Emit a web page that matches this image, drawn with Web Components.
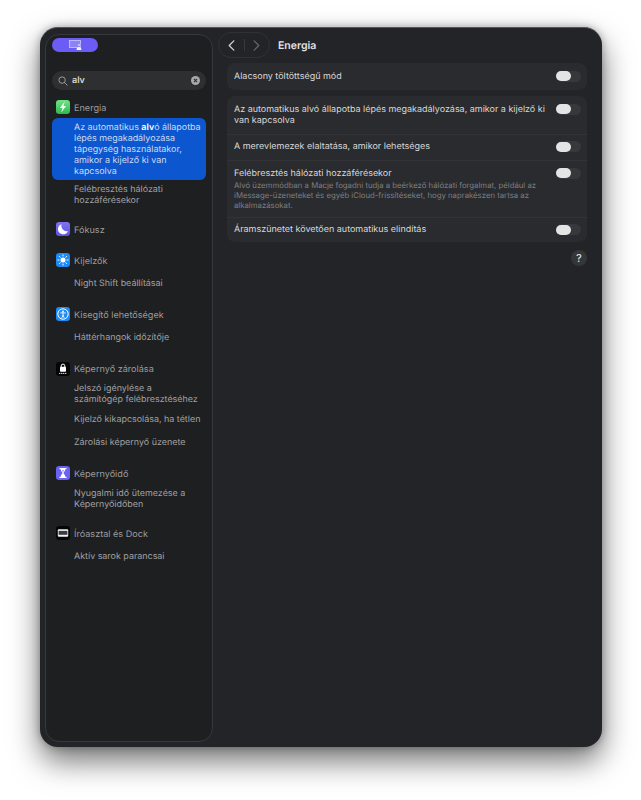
<!DOCTYPE html>
<html lang="hu">
<head>
<meta charset="utf-8">
<title>Energia</title>
<style>
    html,body{margin:0;height:100%;background:#fff;}
    body{font-family:Inter,"Liberation Sans",sans-serif;text-rendering:geometricPrecision;overflow:hidden;}
</style>
</head>
<body>
<s-window>
    <s-sidebar slot="sidebar">
        <s-section title="Energia" icon="bolt" style="--gap:2px;--after:10px">
            <s-item selected>Az automatikus <b>alv</b>ó állapotba<br>lépés megakadályozása<br>tápegység használatakor,<br>amikor a kijelző ki van<br>kapcsolva</s-item>
            <s-item>Felébresztés hálózati<br>hozzáférésekor</s-item>
        </s-section>
        <s-section title="Fókusz" icon="moon" style="--after:13px"></s-section>
        <s-section title="Kijelzők" icon="sun" style="--gap:3px">
            <s-item>Night Shift beállításai</s-item>
        </s-section>
        <s-section title="Kisegítő lehetőségek" icon="access" style="--gap:3px">
            <s-item>Háttérhangok időzítője</s-item>
        </s-section>
        <s-section title="Képernyő zárolása" icon="lock" style="--after:10.5px">
            <s-item>Jelszó igénylése a<br>számítógép felébresztéséhez</s-item>
            <s-item>Kijelző kikapcsolása, ha tétlen</s-item>
            <s-item>Zárolási képernyő üzenete</s-item>
        </s-section>
        <s-section title="Képernyőidő" icon="hourglass" style="--gap:1.5px;--after:10.5px">
            <s-item>Nyugalmi idő ütemezése a<br>Képernyőidőben</s-item>
        </s-section>
        <s-section title="Íróasztal és Dock" icon="dock" style="--gap:3px">
            <s-item>Aktív sarok parancsai</s-item>
        </s-section>
    </s-sidebar>
    <s-toolbar slot="toolbar">Energia</s-toolbar>
    <s-group>
        <s-row label="Alacsony töltöttségű mód"></s-row>
    </s-group>
    <s-group>
        <s-row label="Az automatikus alvó állapotba lépés megakadályozása, amikor a kijelző ki van kapcsolva"></s-row>
        <s-row label="A merevlemezek elaltatása, amikor lehetséges"></s-row>
        <s-row label="Felébresztés hálózati hozzáférésekor">Alvó üzemmódban a Macje fogadni tudja a beérkező hálózati forgalmat, például az iMessage-üzeneteket és egyéb iCloud-frissítéseket, hogy naprakészen tartsa az alkalmazásokat.</s-row>
        <s-row label="Áramszünetet követően automatikus elindítás"></s-row>
    </s-group>
    <s-help></s-help>
</s-window>

<script>
const icons = {
    bolt: `<defs><linearGradient id="g" x1="0" y1="0" x2="0" y2="1"><stop offset="0" stop-color="#6fe585"/><stop offset="1" stop-color="#2fb84e"/></linearGradient></defs><rect width="14" height="14" rx="3.2" fill="url(#g)"/><path d="M8.8 1.6 3.9 7.9h2.7l-1.4 4.5 4.9-6.3H7.4z" fill="#fff"/>`,
    moon: `<defs><linearGradient id="m" x1="0" y1="0" x2="0" y2="1"><stop offset="0" stop-color="#7f74f2"/><stop offset="1" stop-color="#5f54e0"/></linearGradient></defs><rect width="14" height="14" rx="3.2" fill="url(#m)"/><path d="M5.6 2.2a5.2 5.2 0 1 0 6.4 6.9A5.4 5.4 0 0 1 5.6 2.2z" fill="#fff"/>`,
    sun: `<rect width="14" height="14" rx="3.2" fill="#1f8bf5"/><circle cx="7" cy="7" r="2.5" fill="#fff"/><g stroke="#fff" stroke-width="1" stroke-linecap="round"><path d="M7 1.9v1.1M7 11v1.1M1.9 7H3M11 7h1.1M3.4 3.4l.8.8M9.8 9.8l.8.8M3.4 10.6l.8-.8M9.8 4.2l.8-.8"/></g>`,
    access: `<rect width="14" height="14" rx="3.2" fill="#1f8bf5"/><circle cx="7" cy="7" r="5.2" fill="none" stroke="#fff" stroke-width="1"/><circle cx="7" cy="4.5" r=".9" fill="#fff"/><path d="M4.7 5.9h4.6M7 5.9v2.4M7 8.3l-1 2.1M7 8.3l1 2.1" stroke="#fff" stroke-width=".85" fill="none" stroke-linecap="round"/>`,
    lock: `<rect width="14" height="14" rx="3.2" fill="#050505"/><path d="M5.2 5.2V3.9a1.8 1.8 0 0 1 3.6 0v1.3" fill="none" stroke="#fff" stroke-width="1"/><rect x="4" y="4.8" width="6" height="5" rx=".7" fill="#fff"/><g fill="#c8c8c8"><rect x="3" y="10.9" width="1.4" height="1.1"/><rect x="5" y="10.9" width="1.4" height="1.1"/><rect x="7" y="10.9" width="1.4" height="1.1"/><rect x="9" y="10.9" width="1.4" height="1.1"/></g>`,
    hourglass: `<rect width="14" height="14" rx="3.2" fill="#6a62f0"/><path d="M3.9 2.6h6.2M3.9 11.4h6.2" stroke="#fff" stroke-width="1.1" stroke-linecap="round"/><path d="M4.7 3h4.6c0 2.2-1.6 3-1.8 4 .2 1 1.8 1.8 1.8 4H4.7c0-2.2 1.6-3 1.8-4-.2-1-1.8-1.8-1.8-4z" fill="#fff"/><path d="M5.7 3.9h2.6c-.2.9-.8 1.5-1.3 2.2-.5-.7-1.1-1.3-1.3-2.2z" fill="#a9a4f7"/>`,
    dock: `<rect width="14" height="14" rx="3.2" fill="#050505"/><rect x="1.8" y="3.2" width="10.4" height="7.6" rx="1" fill="#f2f2f2"/><rect x="2.6" y="4.9" width="8.8" height="3.9" fill="#3b3b3d"/>`
};

const windowTpl = document.createElement("template");
windowTpl.innerHTML = `
<style>
    :host{
        display:flex;
        position:relative;
        box-sizing:border-box;
        width:562px;
        height:720px;
        margin:27px 0 0 40px;
        padding:6px 0 5px 5px;
        border-radius:18px;
        background:#232427;
        border-top:1px solid #55565a;
        box-shadow:0 14px 30px rgba(0,0,0,.55), 0 0 8px rgba(0,0,0,.3);
    }
    .main{
        flex:1;
        display:flex;
        flex-direction:column;
        padding:0 15px 0 14px;
    }
    .head{margin:-2px 0 5px -9px;}
</style>
<slot name="sidebar"></slot>
<div class="main">
    <div class="head"><slot name="toolbar"></slot></div>
    <slot></slot>
</div>`;

class SWindow extends HTMLElement{
    constructor(){
        super();
        this.attachShadow({mode:"open"});
        this.shadowRoot.appendChild(windowTpl.content.cloneNode(true));
    }
}

const sidebarTpl = document.createElement("template");
sidebarTpl.innerHTML = `
<style>
    :host{
        display:block;
        box-sizing:border-box;
        width:168px;
        flex:none;
        padding:3px 6px 0 6px;
        background:#1e1f20;
        border:1px solid #37383c;
        border-radius:14px;
    }
    .pill{
        width:46px;
        height:14px;
        border-radius:7px;
        background:#6b5cf6;
        display:flex;
        align-items:center;
        justify-content:center;
    }
    .search{
        display:flex;
        align-items:center;
        height:19px;
        margin:19px 0 8px;
        padding:0 6px;
        border-radius:10px;
        background:#2e2f31;
        color:#e4e4e4;
        font-size:9.2px;
        font-weight:500;
    }
    .search svg:first-child{margin-right:4px;}
    .search span{flex:1;}
</style>
<div class="pill">
    <svg width="13" height="10" viewBox="0 0 13 10" fill="none">
        <rect x=".5" y=".5" width="11" height="7" fill="#8d83f8" stroke="#cfcbfd" stroke-width=".8"/>
        <circle cx="10" cy="5" r="1.3" fill="#f4f3ff" stroke="#6b5cf6" stroke-width=".5"/>
        <path d="M7.6 10c0-2 1-2.9 2.4-2.9s2.4.9 2.4 2.9z" fill="#f4f3ff"/>
    </svg>
</div>
<div class="search">
    <svg width="10" height="10" viewBox="0 0 10 10" fill="none" stroke="#a5a5a7" stroke-width=".9">
        <circle cx="4.1" cy="4.1" r="3.2"/><path d="M6.5 6.5 9.3 9.3" stroke-linecap="round"/>
    </svg>
    <span>alv</span>
    <svg width="9" height="9" viewBox="0 0 9 9">
        <circle cx="4.5" cy="4.5" r="4.5" fill="#a9a9ab"/>
        <path d="M2.9 2.9l3.2 3.2M6.1 2.9 2.9 6.1" stroke="#2e2f31" stroke-width="1.1"/>
    </svg>
</div>
<slot></slot>`;

class SSidebar extends HTMLElement{
    constructor(){
        super();
        this.attachShadow({mode:"open"});
        this.shadowRoot.appendChild(sidebarTpl.content.cloneNode(true));
    }
}

const sectionTpl = document.createElement("template");
sectionTpl.innerHTML = `
<style>
    :host{
        display:block;
        margin-bottom:var(--after, 11px);
    }
    .title{
        display:flex;
        align-items:center;
        gap:4px;
        height:18px;
        margin-bottom:var(--gap, 1px);
        padding-left:4px;
        color:#9c9c9f;
        font-size:9.1px;
        font-weight:400;
    }
    .title span{padding-top:2px;}
    svg{display:block;flex:none;}
</style>
<div class="title"></div>
<slot></slot>`;

class SSection extends HTMLElement{
    constructor(){
        super();
        this.attachShadow({mode:"open"});
        this.shadowRoot.appendChild(sectionTpl.content.cloneNode(true));
        const title = this.shadowRoot.querySelector(".title");
        title.innerHTML = `<svg width="14" height="14" viewBox="0 0 14 14">${icons[this.getAttribute("icon")]}</svg><span></span>`;
        title.querySelector("span").textContent = this.getAttribute("title");
    }
}

const itemTpl = document.createElement("template");
itemTpl.innerHTML = `
<style>
    :host{
        display:flex;
        align-items:center;
        box-sizing:border-box;
        min-height:22.4px;
        padding:4px 0 4px 22px;
        color:#a2a2a5;
        font-size:8.93px;
        line-height:11px;
        font-weight:400;
        white-space:nowrap;
    }
    :host([selected]){
        padding-top:3.5px;
        padding-bottom:3.5px;
        border-radius:6px;
        background:#0c57cf;
        color:#cfdcf3;
    }
    ::slotted(b){color:#fff;font-weight:600;}
</style>
<div><slot></slot></div>`;

class SItem extends HTMLElement{
    constructor(){
        super();
        this.attachShadow({mode:"open"});
        this.shadowRoot.appendChild(itemTpl.content.cloneNode(true));
    }
}

const toolbarTpl = document.createElement("template");
toolbarTpl.innerHTML = `
<style>
    :host{
        display:flex;
        align-items:center;
        gap:8px;
        height:26px;
        color:#e2e2e3;
        font-size:10.5px;
        font-weight:600;
    }
    .nav{
        display:flex;
        align-items:center;
        box-sizing:border-box;
        width:52px;
        height:26px;
        border:1px solid #303135;
        border-radius:13px;
    }
    .nav span{flex:1;display:flex;justify-content:center;}
    .nav i{width:1px;height:12px;background:#38393c;}
</style>
<div class="nav">
    <span><svg width="7" height="11" viewBox="0 0 7 11" fill="none" stroke="#d6d6d7" stroke-width="1.2" stroke-linecap="round" stroke-linejoin="round"><path d="M5.8 .8 1.2 5.5l4.6 4.7"/></svg></span>
    <i></i>
    <span><svg width="7" height="11" viewBox="0 0 7 11" fill="none" stroke="#67686b" stroke-width="1.2" stroke-linecap="round" stroke-linejoin="round"><path d="M1.2 .8l4.6 4.7-4.6 4.7"/></svg></span>
</div>
<slot></slot>`;

class SToolbar extends HTMLElement{
    constructor(){
        super();
        this.attachShadow({mode:"open"});
        this.shadowRoot.appendChild(toolbarTpl.content.cloneNode(true));
    }
}

const groupTpl = document.createElement("template");
groupTpl.innerHTML = `
<style>
    :host{
        display:block;
        margin-bottom:6.5px;
        border-radius:8px;
        background:#2a2b2e;
    }
    ::slotted(s-row:not(:first-child)){
        padding-top:6.5px;
        border-top:1px solid #323337;
    }
    ::slotted(s-row:last-child:not(:first-child)){padding-bottom:6px;}
</style>
<slot></slot>`;

class SGroup extends HTMLElement{
    constructor(){
        super();
        this.attachShadow({mode:"open"});
        this.shadowRoot.appendChild(groupTpl.content.cloneNode(true));
    }
}

const rowTpl = document.createElement("template");
rowTpl.innerHTML = `
<style>
    :host{
        display:flex;
        box-sizing:border-box;
        justify-content:space-between;
        gap:6px;
        padding:7.5px 6px 7px 7px;
    }
    .label{color:#d9d9da;font-size:8.98px;line-height:11px;}
    .desc{margin-top:1px;color:#7e7f83;font-size:7.78px;line-height:10px;}
    .desc:empty{display:none;}
    .toggle{
        flex:none;
        position:relative;
        width:25px;
        height:11px;
        border-radius:6px;
        background:#37383b;
    }
    .toggle::after{
        content:"";
        position:absolute;
        left:0;
        top:.5px;
        width:15px;
        height:10px;
        border-radius:5px;
        background:#e4e4e4;
    }
</style>
<div>
    <div class="label"></div>
    <div class="desc"><slot></slot></div>
</div>
<div class="toggle"></div>`;

class SRow extends HTMLElement{
    constructor(){
        super();
        this.attachShadow({mode:"open"});
        this.shadowRoot.appendChild(rowTpl.content.cloneNode(true));
        this.shadowRoot.querySelector(".label").textContent = this.getAttribute("label");
    }
}

const helpTpl = document.createElement("template");
helpTpl.innerHTML = `
<style>
    :host{
        display:flex;
        align-items:center;
        justify-content:center;
        align-self:flex-end;
        width:16px;
        height:16px;
        margin-top:1px;
        border-radius:50%;
        background:#353639;
        color:#dcdcdd;
        font-size:11px;
        font-weight:500;
    }
</style>
?`;

class SHelp extends HTMLElement{
    constructor(){
        super();
        this.attachShadow({mode:"open"});
        this.shadowRoot.appendChild(helpTpl.content.cloneNode(true));
    }
}

window.customElements.define("s-window", SWindow);
window.customElements.define("s-sidebar", SSidebar);
window.customElements.define("s-section", SSection);
window.customElements.define("s-item", SItem);
window.customElements.define("s-toolbar", SToolbar);
window.customElements.define("s-group", SGroup);
window.customElements.define("s-row", SRow);
window.customElements.define("s-help", SHelp);
</script>
</body>
</html>
